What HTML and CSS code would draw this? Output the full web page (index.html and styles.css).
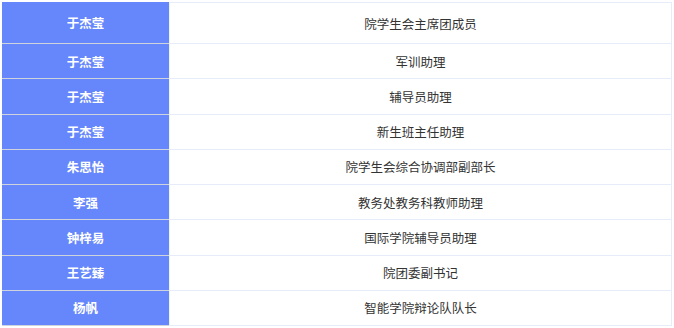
FILE: index.html
```html
<!DOCTYPE html>
<html lang="zh-CN">
<head>
<meta charset="utf-8">
<title>职务列表</title>
<link rel="stylesheet" href="styles.css">
</head>
<body>
<div class="table">
  <div class="row first"><div class="name">于杰莹</div><div class="role">院学生会主席团成员</div></div>
  <div class="row"><div class="name">于杰莹</div><div class="role">军训助理</div></div>
  <div class="row"><div class="name">于杰莹</div><div class="role">辅导员助理</div></div>
  <div class="row"><div class="name">于杰莹</div><div class="role">新生班主任助理</div></div>
  <div class="row"><div class="name">朱思怡</div><div class="role">院学生会综合协调部副部长</div></div>
  <div class="row"><div class="name">李强</div><div class="role">教务处教务科教师助理</div></div>
  <div class="row"><div class="name">钟梓易</div><div class="role">国际学院辅导员助理</div></div>
  <div class="row"><div class="name">王艺臻</div><div class="role">院团委副书记</div></div>
  <div class="row"><div class="name">杨帆</div><div class="role">智能学院辩论队队长</div></div>
</div>
</body>
</html>
```
FILE: styles.css
```css
html, body {
  margin: 0;
  padding: 0;
  background: #ffffff;
}
body {
  font-family: "Noto Sans CJK SC", "Noto Sans", sans-serif;
  font-size: 12.5px;
}
.table {
  margin: 2px 0 0 2px;
  width: 670px;
}
.row {
  display: grid;
  grid-template-columns: 167px 1fr;
  height: 35.25px;
}
.row.first {
  height: 42px;
}
.name {
  background: #6687fb;
  color: #ffffff;
  font-weight: bold;
  border-bottom: 1px solid #cfd3dc;
  display: flex;
  align-items: center;
  justify-content: center;
}
.role {
  color: #333333;
  border-left: 1px solid #eef2fb;
  border-right: 1px solid #e6ecf8;
  border-bottom: 1px solid #e6ecf8;
  display: flex;
  align-items: center;
  justify-content: center;
}
.row.first .role {
  border-top: 1px solid #e6ecf8;
}
```
